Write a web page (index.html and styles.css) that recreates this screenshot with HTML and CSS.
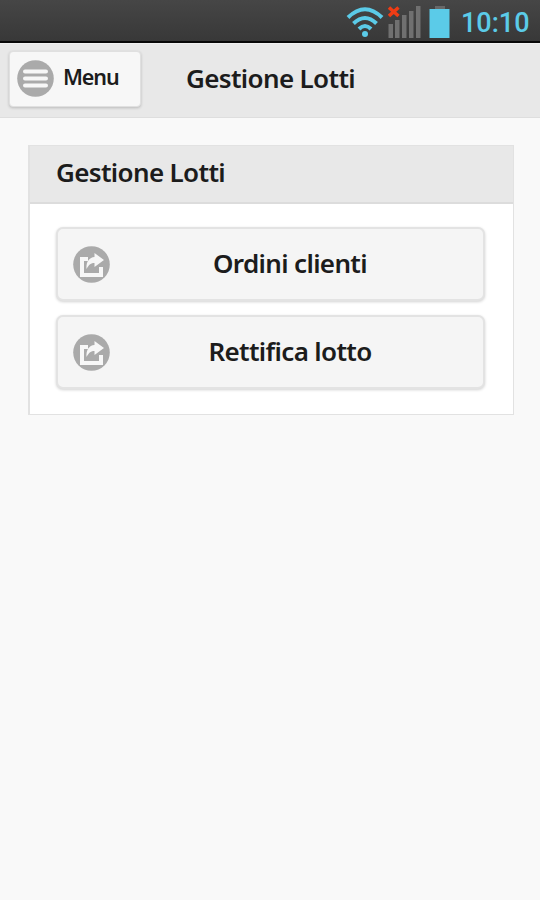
FILE: index.html
```
<!doctype html>
<html lang="it">
<head>
<meta charset="utf-8">
<meta name="viewport" content="width=device-width, initial-scale=1">
<title>Gestione Lotti</title>
<link rel="stylesheet" href="styles.css">
</head>
<body>
    <div class="status">
        <svg class="wifi" width="38" height="31" viewBox="0 0 38 31">
            <path d="M2 10.5Q19-6 36 10.5M7.5 16.5Q19 5.500 30.500 16.500M13 22Q19 16 25 22"/>
            <circle cx="19" cy="27" r="3"/>
        </svg>
        <svg class="signal" width="33" height="32" viewBox="0 0 33 32">
            <path class="bars" d="M0.500 18h4.500v14h-4.500zM7 14h4.500v18h-4.500zM14 9h4.500v23h-4.500zM21 5h4.500v27h-4.500zM28 0h4.500v32h-4.500z"/>
            <path class="none" d="M1 1.500l9.500 8.500M10.500 1.500l-9.500 8.500"/>
        </svg>
        <svg class="battery" width="21" height="32" viewBox="0 0 21 32">
            <path fill="#686868" d="M6 0h10v3h-10z"/>
            <path fill="#5bcbe8" d="M0.500 3h20v29h-20z"/>
        </svg>
        <span class="clock">10:10</span>
    </div>
    <div class="header">
        <a class="menu">
            <svg width="37" height="37" viewBox="0 0 37 37">
                <circle cx="18.500" cy="18.500" r="18.300"/>
                <path class="lines" d="M8 11.500h21M8 18.500h21M8 25.500h21"/>
            </svg>
            <span>Menu</span>
        </a>
        <h1>Gestione Lotti</h1>
    </div>
    <div class="panel">
        <h2>Gestione Lotti</h2>
        <div class="content">
            <a class="btn">
                <svg width="37" height="37" viewBox="0 0 37 37">
                    <circle cx="18.500" cy="18.500" r="18.300"/>
                    <path class="tray" d="M15 13h-6v16h19v-8"/>
                    <path class="arrow" d="M21.500 7l9.500 7-9.500 7v-4c-3.500 0-5.500 1.500-8 6-.5-7 2.500-11.500 8-12z"/>
                </svg>
                <span>Ordini clienti</span>
            </a>
            <a class="btn">
                <svg width="37" height="37" viewBox="0 0 37 37">
                    <circle cx="18.500" cy="18.500" r="18.300"/>
                    <path class="tray" d="M15 13h-6v16h19v-8"/>
                    <path class="arrow" d="M21.500 7l9.500 7-9.500 7v-4c-3.500 0-5.500 1.500-8 6-.5-7 2.500-11.500 8-12z"/>
                </svg>
                <span>Rettifica lotto</span>
            </a>
        </div>
    </div>
</body>
</html>
```
FILE: styles.css
```
* {
    box-sizing: border-box;
}
html, body {
    margin: 0;
    padding: 0;
}
body {
    background: #f9f9f9;
    color: #1c1c1c;
    font-family: "Noto Sans", sans-serif;
    font-weight: 600;
    min-height: 900px;
}
h1, h2 {
    margin: 0;
    font-size: 26px;
    font-weight: 600;
    letter-spacing: -.65px;
    white-space: nowrap;
}
svg {
    display: block;
    flex: none;
}
.status {
    display: flex;
    align-items: flex-start;
    justify-content: flex-end;
    height: 43px;
    padding: 6px 10px 0 0;
    background: linear-gradient(#464646, #383838);
    border-bottom: 2px solid #080808;
}
.wifi {
    margin: 1px 4px 0 0;
    fill: none;
    stroke: #5bcbe8;
    stroke-width: 4;
}
.wifi circle {
    fill: #5bcbe8;
    stroke: none;
}
.signal {
    margin-right: 8px;
}
.bars {
    fill: #707070;
}
.none {
    stroke: #f03c14;
    stroke-width: 3.5;
}
.clock {
    width: 69px;
    margin-left: 11px;
    color: #5bcbe8;
    font: 500 27px/35px Roboto, sans-serif;
    white-space: nowrap;
}
.header {
    display: flex;
    height: 75px;
    padding: 7px 9px;
    background: #e8e8e8;
    border-top: 1px solid #f0f0f0;
    border-bottom: 1px solid #dedede;
}
.header h1 {
    margin-left: 45px;
    line-height: 55px;
}
.menu {
    display: flex;
    align-items: center;
    width: 132px;
    height: 56px;
    padding-left: 8px;
    background: #f7f7f7;
    border: 1px solid #e0e0e0;
    border-radius: 4px;
    box-shadow: 0 1px 3px rgba(0, 0, 0, .2);
    font-size: 21.5px;
    letter-spacing: -1.1px;
}
.menu svg {
    margin: -2px 0 0 -1px;
}
.menu span {
    margin: -5px 0 0 9px;
}
circle {
    fill: #aaa;
}
.lines {
    stroke: #f7f7f7;
    stroke-width: 4;
    stroke-linecap: round;
}
.panel {
    width: 486px;
    height: 270px;
    margin: 27px 0 0 28px;
    background: #fff;
    border: 1px solid #e2e2e2;
    border-left-width: 2px;
}
.panel h2 {
    height: 58px;
    padding-left: 26px;
    background: #e8e8e8;
    border-bottom: 2px solid #dcdcdc;
    line-height: 53px;
}
.content {
    display: flex;
    flex-direction: column;
    gap: 14px;
    padding: 23px 28px 0 26px;
}
.btn {
    display: flex;
    align-items: center;
    height: 74px;
    padding: 0 13px 0 15px;
    background: #f5f5f5;
    border: 2px solid #e3e3e3;
    border-radius: 7px;
    box-shadow: 0 1px 3px rgba(0, 0, 0, .18);
    font-size: 26px;
    letter-spacing: -.65px;
}
.btn span {
    flex: 1;
    margin-top: -3px;
    text-align: center;
    white-space: nowrap;
}
.tray {
    fill: none;
    stroke: #f7f7f7;
    stroke-width: 4;
}
.arrow {
    fill: #f7f7f7;
}
```
